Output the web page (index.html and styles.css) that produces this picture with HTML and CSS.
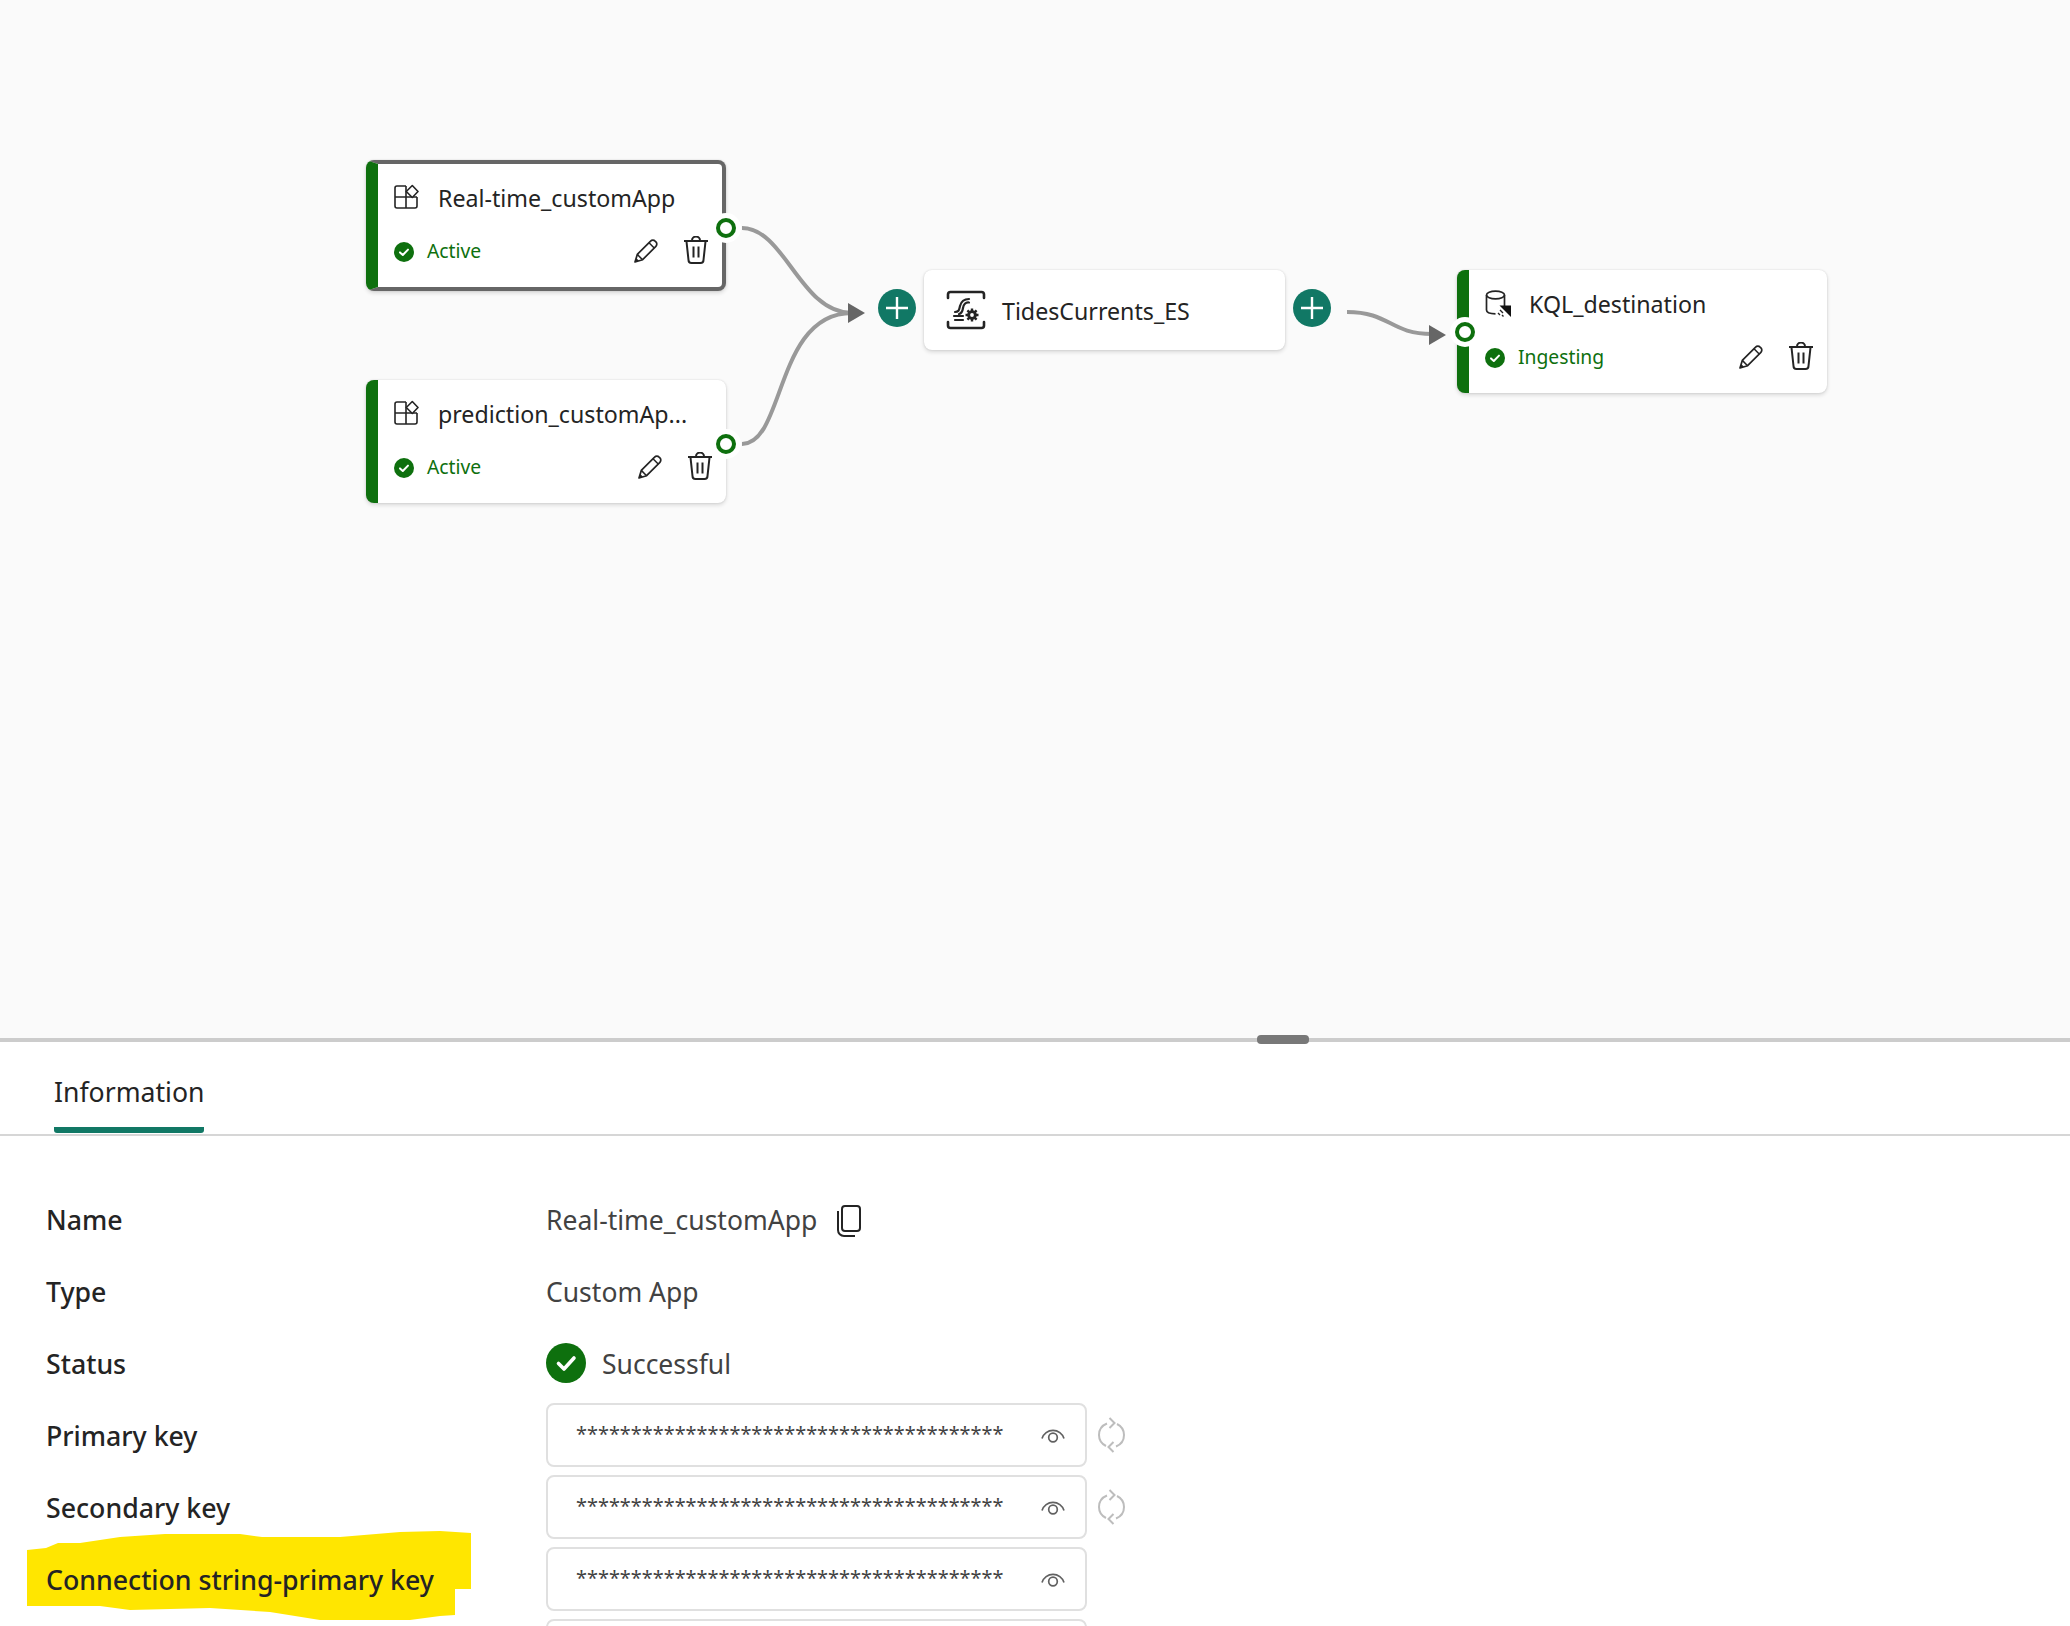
FILE: index.html
```html
<!DOCTYPE html>
<html lang="en">
<head>
<meta charset="utf-8">
<title>Eventstream</title>
<link rel="stylesheet" href="styles.css">
</head>
<body>
<div class="page">
  <section class="canvas">
    <svg class="edges" viewBox="0 0 2070 1038" aria-hidden="true">
      <g fill="none" stroke="#999" stroke-width="4">
        <path d="M742 228C785 228 800 313 852 313"/>
        <path d="M742 444C785 444 775 313 852 313"/>
        <path d="M1347 312C1390 312 1390 334 1432 334"/>
      </g>
      <path d="M848 303L865 313L848 323Z" fill="#666"/>
      <path d="M1429 325L1446 335L1429 345Z" fill="#666"/>
    </svg>

    <article class="node node-source node-first is-selected">
      <div class="node-head">
        <svg class="ic-app" viewBox="0 0 25 25"><path d="M12 2H3a2 2 0 0 0-2 2v18a2 2 0 0 0 2 2h18a2 2 0 0 0 2-2V13M12 2v22M1 13h22" fill="none" stroke="#242424" stroke-width="1.6"/><path d="M18.3 1.5l5.7 6-5.7 6-6-6z" fill="#fff" stroke="#242424" stroke-width="1.6" stroke-linejoin="round"/></svg>
        <span class="node-title">Real-time_customApp</span>
      </div>
      <div class="node-foot">
        <svg class="ic-check" viewBox="0 0 20 20"><circle cx="10" cy="10" r="10" fill="#0e700e"/><path d="M6 10.4l2.8 2.6L14 7.6" fill="none" stroke="#fff" stroke-width="2" stroke-linecap="round" stroke-linejoin="round"/></svg>
        <span class="node-status">Active</span>
        <span class="node-actions">
          <svg class="ic-pencil" viewBox="0 0 24 24"><path d="M1 23l2.3-7.6L16.6 2.1a3.1 3.1 0 0 1 4.5 0l.8.8a3.1 3.1 0 0 1 0 4.4L8.6 20.7z" fill="none" stroke="#242424" stroke-width="1.7" stroke-linejoin="round"/><path d="M3.3 15.4l5.3 5.3M15 3.8l5.2 5.2" fill="none" stroke="#242424" stroke-width="1.5"/><path d="M1 23l1.2-4 2.8 2.8z" fill="#242424"/></svg>
          <svg class="ic-trash" viewBox="0 0 26 28"><path d="M9 4.500a4 4 0 0 1 8 0M1 5h24M3.5 5.5l2 18.5a3 3 0 0 0 3 3h9a3 3 0 0 0 3-3l2-18.5M10.5 10.5v11M15.5 10.5v11" fill="none" stroke="#242424" stroke-width="2"/></svg>
        </span>
      </div>
      <span class="port port-out"></span>
    </article>

    <article class="node node-source node-second">
      <div class="node-head">
        <svg class="ic-app" viewBox="0 0 25 25"><path d="M12 2H3a2 2 0 0 0-2 2v18a2 2 0 0 0 2 2h18a2 2 0 0 0 2-2V13M12 2v22M1 13h22" fill="none" stroke="#242424" stroke-width="1.6"/><path d="M18.3 1.5l5.7 6-5.7 6-6-6z" fill="#fff" stroke="#242424" stroke-width="1.6" stroke-linejoin="round"/></svg>
        <span class="node-title">prediction_customAp...</span>
      </div>
      <div class="node-foot">
        <svg class="ic-check" viewBox="0 0 20 20"><circle cx="10" cy="10" r="10" fill="#0e700e"/><path d="M6 10.4l2.8 2.6L14 7.6" fill="none" stroke="#fff" stroke-width="2" stroke-linecap="round" stroke-linejoin="round"/></svg>
        <span class="node-status">Active</span>
        <span class="node-actions">
          <svg class="ic-pencil" viewBox="0 0 24 24"><path d="M1 23l2.3-7.6L16.6 2.1a3.1 3.1 0 0 1 4.5 0l.8.8a3.1 3.1 0 0 1 0 4.4L8.6 20.7z" fill="none" stroke="#242424" stroke-width="1.7" stroke-linejoin="round"/><path d="M3.3 15.4l5.3 5.3M15 3.8l5.2 5.2" fill="none" stroke="#242424" stroke-width="1.5"/><path d="M1 23l1.2-4 2.8 2.8z" fill="#242424"/></svg>
          <svg class="ic-trash" viewBox="0 0 26 28"><path d="M9 4.500a4 4 0 0 1 8 0M1 5h24M3.5 5.5l2 18.5a3 3 0 0 0 3 3h9a3 3 0 0 0 3-3l2-18.5M10.5 10.5v11M15.5 10.5v11" fill="none" stroke="#242424" stroke-width="2"/></svg>
        </span>
      </div>
      <span class="port port-out"></span>
    </article>

    <svg class="plus plus-left" viewBox="0 0 38 38"><circle cx="19" cy="19" r="19" fill="#117865"/><path d="M19 8v22M8 19h22" stroke="#fff" stroke-width="2.4"/></svg>

    <article class="stream">
      <svg class="ic-stream" viewBox="0 0 40 40">
        <path d="M2 8V4.500A2.500 2.500 0 0 1 4.500 2h31A2.500 2.500 0 0 1 38 4.500V8M2 32v3.500A2.500 2.500 0 0 0 4.500 38h31a2.500 2.500 0 0 0 2.500-2.500V32" fill="none" stroke="#242424" stroke-width="2.6" stroke-linecap="round"/>
        <path d="M9 22c4 0 4-2 5-6s3-7 9-7M13 24c3-.5 3.500-2.500 4-6s2.500-6 6-5.500M8 26h9M9 30h8" fill="none" stroke="#242424" stroke-width="2.2" stroke-linecap="round"/>
        <path d="M26 18.500v13M19.500 25h13M21.4 20.400l9.200 9.200M30.600 20.400l-9.200 9.200" stroke="#242424" stroke-width="2.4"/>
        <circle cx="26" cy="25" r="4.800" fill="#242424"/>
        <circle cx="26" cy="25" r="1.900" fill="#fff"/>
      </svg>
      <span class="node-title stream-title">TidesCurrents_ES</span>
    </article>

    <svg class="plus plus-right" viewBox="0 0 38 38"><circle cx="19" cy="19" r="19" fill="#117865"/><path d="M19 8v22M8 19h22" stroke="#fff" stroke-width="2.4"/></svg>

    <article class="node node-dest">
      <div class="node-head">
        <svg class="ic-db" viewBox="0 0 27 27">
          <ellipse cx="10.5" cy="5" rx="9" ry="3.8" fill="none" stroke="#242424" stroke-width="1.7"/>
          <path d="M1.500 5v15c0 2.500 4 3.800 9 3.800M19.500 5v11" fill="none" stroke="#242424" stroke-width="1.7"/>
          <path d="M14.500 15.500H26V27z" fill="#111"/>
          <path d="M15 20l3 3M13 23l2 2M17 25l1.500 1.500" stroke="#242424" stroke-width="1.4"/>
        </svg>
        <span class="node-title node-title-dest">KQL_destination</span>
      </div>
      <div class="node-foot">
        <svg class="ic-check" viewBox="0 0 20 20"><circle cx="10" cy="10" r="10" fill="#0e700e"/><path d="M6 10.4l2.8 2.6L14 7.6" fill="none" stroke="#fff" stroke-width="2" stroke-linecap="round" stroke-linejoin="round"/></svg>
        <span class="node-status">Ingesting</span>
        <span class="node-actions">
          <svg class="ic-pencil" viewBox="0 0 24 24"><path d="M1 23l2.3-7.6L16.6 2.1a3.1 3.1 0 0 1 4.5 0l.8.8a3.1 3.1 0 0 1 0 4.4L8.6 20.7z" fill="none" stroke="#242424" stroke-width="1.7" stroke-linejoin="round"/><path d="M3.3 15.4l5.3 5.3M15 3.8l5.2 5.2" fill="none" stroke="#242424" stroke-width="1.5"/><path d="M1 23l1.2-4 2.8 2.8z" fill="#242424"/></svg>
          <svg class="ic-trash" viewBox="0 0 26 28"><path d="M9 4.500a4 4 0 0 1 8 0M1 5h24M3.5 5.5l2 18.5a3 3 0 0 0 3 3h9a3 3 0 0 0 3-3l2-18.5M10.5 10.5v11M15.5 10.5v11" fill="none" stroke="#242424" stroke-width="2"/></svg>
        </span>
      </div>
      <span class="port port-in"></span>
    </article>
  </section>

  <div class="splitter"><span class="splitter-handle"></span></div>

  <section class="panel">
    <nav class="tabs"><span class="tab">Information</span></nav>

    <svg class="marker" viewBox="0 0 444 92" aria-hidden="true"><path d="M0 20L19 18L31 13L53 13L93 7L138 4L213 4L235 7L313 7L373 2L413 1L444 3V59H428V85L413 86L383 90L293 90L243 82L183 78L103 80L73 76H0Z" fill="#ffe600"/></svg>

    <div class="info">
      <div class="label">Name</div>
      <div class="value"><span class="value-text">Real-time_customApp</span>
        <svg class="ic-copy" viewBox="0 0 26 32"><rect x="6" y="1" width="18" height="25" rx="3" fill="none" stroke="#242424" stroke-width="2"/><path d="M2 6v19a6 6 0 0 0 6 6h11" fill="none" stroke="#242424" stroke-width="2"/></svg>
      </div>
      <div class="label">Type</div>
      <div class="value"><span class="value-text">Custom App</span></div>
      <div class="label">Status</div>
      <div class="value">
        <svg class="ic-success" viewBox="0 0 40 40"><circle cx="20" cy="20" r="20" fill="#0e700e"/><path d="M12.5 20.5l5.500 5.500L28 15" fill="none" stroke="#fff" stroke-width="3.6" stroke-linecap="round" stroke-linejoin="round"/></svg>
        <span class="value-text status-text">Successful</span>
      </div>
      <div class="label">Primary key</div>
      <div class="value">
        <div class="secret"><span class="stars">***************************************</span><svg class="ic-eye" viewBox="0 0 24 17"><path d="M1 12.5a11.5 11.5 0 0 1 22 0" fill="none" stroke="#616161" stroke-width="1.7"/><circle cx="12" cy="11.5" r="4.3" fill="none" stroke="#616161" stroke-width="1.7"/></svg></div>
        <svg class="ic-refresh" viewBox="0 0 28 36"><path d="M9.500 6.500C4.500 8.500 1.500 13 1.500 18c0 5 3 9 7 11M18.500 29.500c5-2 8-6.500 8-11.500 0-5-3-9-7-11M12 1l5 5-5 5M16 25l-5 5 5 5" fill="none" stroke="#bdbdbd" stroke-width="2"/></svg>
      </div>
      <div class="label">Secondary key</div>
      <div class="value">
        <div class="secret"><span class="stars">***************************************</span><svg class="ic-eye" viewBox="0 0 24 17"><path d="M1 12.5a11.5 11.5 0 0 1 22 0" fill="none" stroke="#616161" stroke-width="1.7"/><circle cx="12" cy="11.5" r="4.3" fill="none" stroke="#616161" stroke-width="1.7"/></svg></div>
        <svg class="ic-refresh" viewBox="0 0 28 36"><path d="M9.500 6.500C4.500 8.500 1.500 13 1.500 18c0 5 3 9 7 11M18.500 29.500c5-2 8-6.500 8-11.500 0-5-3-9-7-11M12 1l5 5-5 5M16 25l-5 5 5 5" fill="none" stroke="#bdbdbd" stroke-width="2"/></svg>
      </div>
      <div class="label">Connection string-primary key</div>
      <div class="value">
        <div class="secret"><span class="stars">***************************************</span><svg class="ic-eye" viewBox="0 0 24 17"><path d="M1 12.5a11.5 11.5 0 0 1 22 0" fill="none" stroke="#616161" stroke-width="1.7"/><circle cx="12" cy="11.5" r="4.3" fill="none" stroke="#616161" stroke-width="1.7"/></svg></div>
      </div>
      <div class="label"></div>
      <div class="value"><div class="secret"></div></div>
    </div>
  </section>
</div>
</body>
</html>
```

FILE: styles.css
```css
*, *::before, *::after { box-sizing: border-box; }
html, body { margin: 0; padding: 0; }
body {
  width: 2070px;
  height: 1626px;
  overflow: hidden;
  background: #fff;
  color: #242424;
  font-family: "Noto Sans", "Open Sans", sans-serif;
}
.page { position: relative; width: 2070px; height: 1626px; overflow: hidden; }

/* canvas */
.canvas { position: relative; height: 1038px; background: #fafafa; }
.edges { position: absolute; left: 0; top: 0; width: 2070px; height: 1038px; }

.node {
  position: absolute;
  width: 360px;
  height: 123px;
  padding: 20px 13px 22px 17px;
  background: #fff;
  border-left: 12px solid #0e700e;
  border-radius: 8px;
  box-shadow: 0 2px 4px rgba(0,0,0,.14), 0 0 2px rgba(0,0,0,.12);
}
.node-first { left: 366px; top: 160px; }
.node-second { left: 366px; top: 380px; }
.node-dest { left: 1457px; top: 270px; width: 370px; }
.is-selected {
  height: 131px;
  border-top: 4px solid #666;
  border-right: 4px solid #666;
  border-bottom: 4px solid #666;
}
.node-head { display: flex; align-items: center; gap: 20px; height: 28px; }
.node-foot { display: flex; align-items: center; height: 28px; margin-top: 25px; }
.node-title { font-size: 23.2px; line-height: 28px; margin-top: -1px; white-space: nowrap; color: #242424; }
.node-title-dest { margin-left: -3px; }
.stream-title { margin-top: 2px; }
.node-status { margin: -1px 0 0 13px; font-size: 19.3px; color: #0e700e; }
.node-actions { display: flex; align-items: center; gap: 25px; margin-left: auto; }

.ic-app { width: 25px; height: 25px; flex: none; margin: -3px -1px 0 -1px; }
.ic-db { width: 27px; height: 27px; flex: none; margin: -2px 0 0 -1px; }
.ic-check { width: 20px; height: 20px; flex: none; margin-top: 1px; margin-left: -1px; }
.ic-pencil { width: 24px; height: 24px; flex: none; }
.ic-trash { width: 26px; height: 28px; flex: none; margin-top: -3px; }

.port {
  position: absolute;
  top: 49px;
  width: 30px;
  height: 30px;
  border-radius: 50%;
  background: #fff;
}
.port::after {
  content: "";
  position: absolute;
  left: 5px;
  top: 5px;
  width: 20px;
  height: 20px;
  border: 4.5px solid #0e700e;
  border-radius: 50%;
  background: #fff;
}
.port-out { right: -15px; }
.is-selected .port-out { right: -19px; }
.port-in { left: -19px; top: 47px; }

.plus { position: absolute; top: 289px; width: 38px; height: 38px; }
.plus-left { left: 878px; }
.plus-right { left: 1293px; }

.stream {
  position: absolute;
  left: 924px;
  top: 270px;
  display: flex;
  align-items: center;
  gap: 16px;
  width: 361px;
  height: 80px;
  padding-left: 22px;
  background: #fff;
  border-radius: 8px;
  box-shadow: 0 2px 4px rgba(0,0,0,.14), 0 0 2px rgba(0,0,0,.12);
}
.ic-stream { width: 40px; height: 40px; flex: none; }

/* splitter */
.splitter { position: relative; height: 4px; background: #ccc; }
.splitter-handle {
  position: absolute;
  left: 1257px;
  top: -3px;
  width: 52px;
  height: 9px;
  border-radius: 4px;
  background: #787878;
}

/* panel */
.panel { position: relative; }
.tabs { height: 94px; padding-left: 54px; border-bottom: 2px solid #d6d6d6; }
.tab {
  display: inline-block;
  height: 91px;
  padding-top: 30px;
  border-bottom: 6px solid #117865;
  border-radius: 0 0 3px 3px;
  font-size: 26.6px;
  line-height: 40px;
  color: #242424;
}
.marker { position: absolute; left: 27px; top: 488px; width: 444px; height: 92px; }

.info {
  position: relative;
  display: grid;
  grid-template-columns: 500px 1fr;
  grid-auto-rows: 64px;
  row-gap: 8px;
  padding: 51px 0 0 46px;
}
.label { display: flex; align-items: center; padding-top: 1px; font-size: 26.7px; font-weight: 500; color: #242424; }
.value { display: flex; align-items: center; font-size: 26.5px; color: #424242; }
.value-text { margin-top: 2px; }
.ic-copy { width: 26px; height: 32px; flex: none; margin: 3px 0 0 19px; }
.ic-success { width: 40px; height: 40px; flex: none; }
.status-text { margin-left: 16px; }

.secret {
  display: flex;
  align-items: center;
  width: 541px;
  height: 64px;
  padding: 0 20px 0 28px;
  border: 2px solid #e0e0e0;
  border-radius: 8px;
  background: #fff;
}
.stars {
  width: 428px;
  overflow: hidden;
  white-space: nowrap;
  font-size: 19.9px;
  line-height: 28px;
  margin-top: -3px;
  color: #424242;
}
.ic-eye { width: 24px; height: 17px; flex: none; margin: -2px 0 0 auto; }
.ic-refresh { width: 29px; height: 36px; flex: none; margin-left: 10px; }
```
